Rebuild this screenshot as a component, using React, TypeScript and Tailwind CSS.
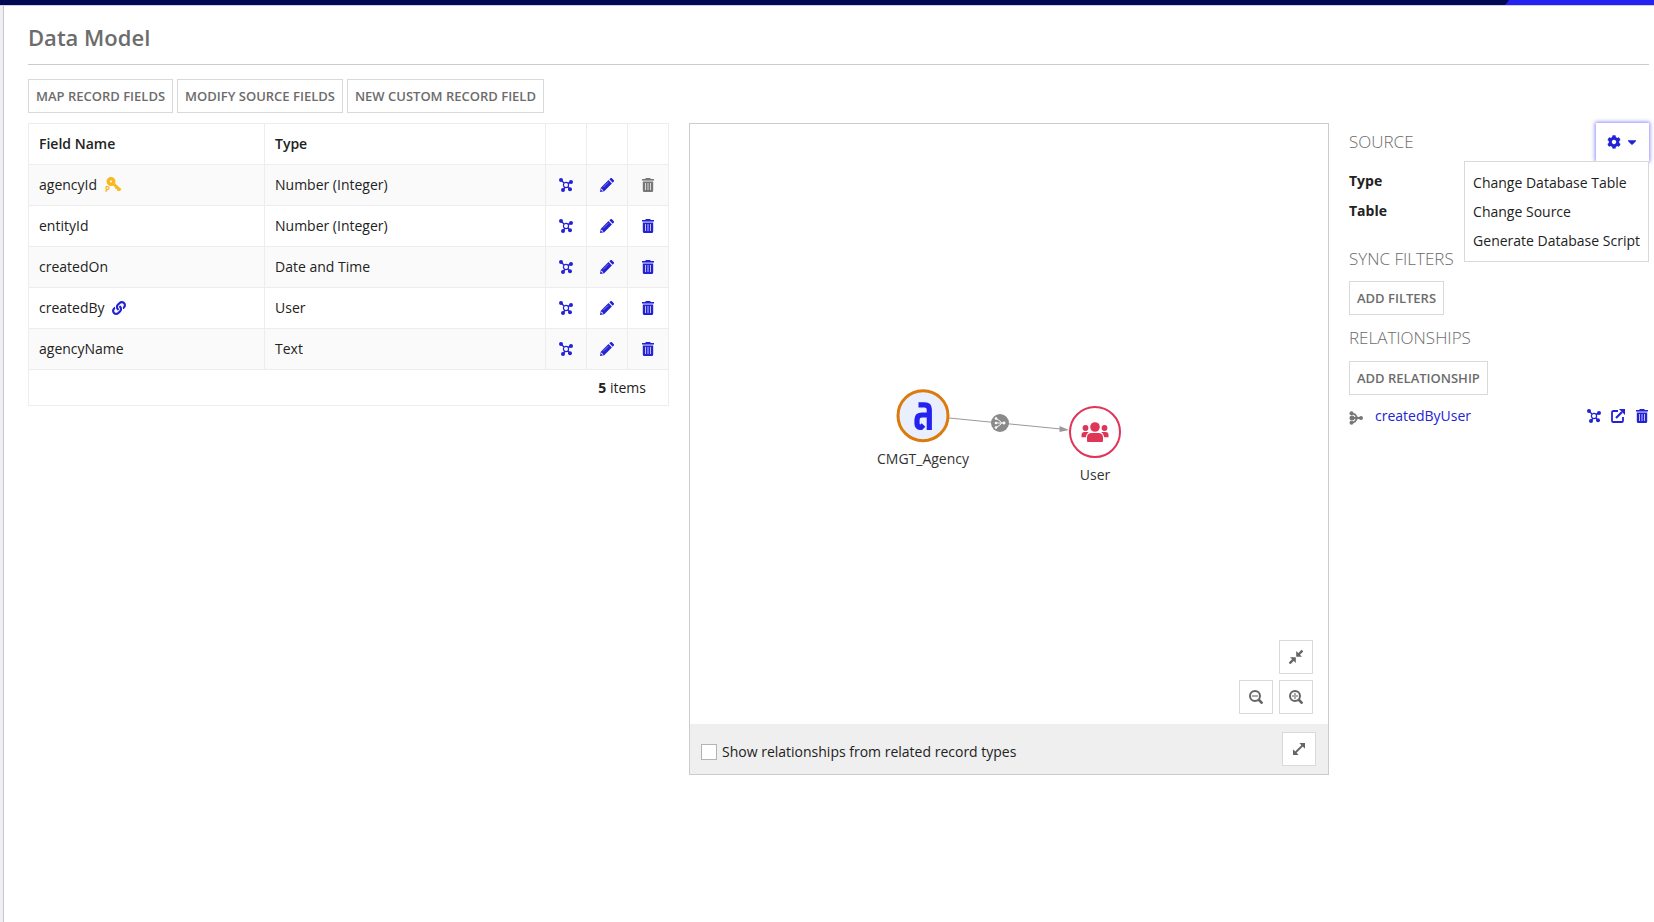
import type { ReactNode } from 'react';
import { FaCaretDown, FaCog, FaLink } from 'react-icons/fa';

const FIELDS = [
  { name: 'agencyId', type: 'Number (Integer)', isKey: true },
  { name: 'entityId', type: 'Number (Integer)' },
  { name: 'createdOn', type: 'Date and Time' },
  { name: 'createdBy', type: 'User', isLinked: true },
  { name: 'agencyName', type: 'Text' },
];

const SOURCE_ACTIONS = ['Change Database Table', 'Change Source', 'Generate Database Script'];

function RelationIcon() {
  return (
    <svg width="14" height="14" viewBox="0 0 14 14" fill="currentColor" stroke="currentColor">
      <path d="M2 2 5 5M12 4 9 5.500M4 12 6 9M11 11.500 9 9" strokeWidth="1.400" />
      <circle cx="7" cy="7" r="2.600" fill="none" strokeWidth="1.200" />
      <g stroke="none">
        <circle cx="2" cy="2" r="2" />
        <circle cx="12" cy="4" r="2" />
        <circle cx="4" cy="12" r="2" />
        <circle cx="11" cy="11.200" r="2" />
      </g>
    </svg>
  );
}

function PencilIcon() {
  return (
    <svg width="14" height="14" viewBox="0 0 14 14">
      <path
        fill="currentColor"
        d="M0 14 .8 9.800 8.500 2.100l3.400 3.400-7.700 7.700zM9.300 1.300 10.200.4a1.300 1.300 0 0 1 1.900 0l1.500 1.500a1.300 1.300 0 0 1 0 1.900l-.9.900z"
      />
      <path d="M3.200 9.300 8.300 4.200" stroke="#fff" strokeWidth=".8" opacity=".5" />
      <path d="M1 11.600 1.400 10.400 3.400 12.400l-1.200.4z" fill="#fff" />
    </svg>
  );
}

function TrashIcon() {
  return (
    <svg width="14" height="14" viewBox="0 0 14 14">
      <path fill="currentColor" d="M1 1h3.500V0h5v1H13v1.600H1zM1.800 4h10.400v8.500A1.500 1.500 0 0 1 10.700 14H3.300a1.500 1.500 0 0 1-1.500-1.500z" />
      <path d="M1.800 3.300h10.400" stroke="currentColor" strokeWidth="1.400" opacity=".5" />
      <path d="M4.500 5v7M7 5v7M9.500 5v7" stroke="#fff" strokeWidth="1" opacity=".7" />
    </svg>
  );
}

function KeyIcon() {
  return (
    <svg width="18" height="20" viewBox="0 -2 18 20">
      <g fill="none" stroke="#f9b81c">
        <circle cx="7" cy="4.500" r="2.800" strokeWidth="3.400" />
        <path d="m9.500 7 7 6.300" strokeWidth="2.800" />
        <path d="m11.500 10 .8 2M14 12v2" strokeWidth="1.600" />
      </g>
      <text x="1" y="15" fill="#f9b81c" className="text-[8px] font-bold">P</text>
    </svg>
  );
}

function BranchIcon() {
  return (
    <svg width="14" height="14" viewBox="0 0 14 14" fill="currentColor" stroke="currentColor">
      <path d="M2.500 2 6 3.500 8 6.500M2.500 12 6 10.500 8 7.500M2 7h10" fill="none" strokeWidth="1.800" />
      <g stroke="none">
        <circle cx="2.500" cy="2.200" r="2" />
        <circle cx="3" cy="7" r="2.500" />
        <circle cx="2.500" cy="11.800" r="2" />
        <circle cx="12" cy="7" r="2" />
      </g>
    </svg>
  );
}

function ExternalIcon() {
  return (
    <svg width="14" height="14" viewBox="0 0 14 14">
      <path d="M7 2H2.300A1.300 1.300 0 0 0 1 3.300v8.400A1.300 1.300 0 0 0 2.300 13h8.400a1.300 1.300 0 0 0 1.300-1.300V8" fill="none" stroke="currentColor" strokeWidth="1.800" />
      <path d="m5 9 6-6" stroke="currentColor" strokeWidth="2.200" />
      <path d="M8 0h6v6z" fill="currentColor" />
    </svg>
  );
}

function ZoomIcon({ plus = false }: { plus?: boolean }) {
  return (
    <svg width="14" height="14" viewBox="0 0 14 14" fill="none" stroke="currentColor">
      <circle cx="6" cy="6" r="5" strokeWidth="2" />
      <path d="m9.500 9.500 4 4" strokeWidth="2.600" />
      <path d={plus ? 'M3 6h6M6 3v6' : 'M3 6h6'} strokeWidth="2" opacity=".55" />
    </svg>
  );
}

function CollapseIcon() {
  return (
    <svg width="14" height="14" viewBox="0 0 14 14" fill="currentColor">
      <path d="M7.200 1v5.800H13zM1 7.200H6.800v5.800z" />
      <path d="m9 5 4.500-4.500M.5 13.500 5 9" stroke="currentColor" strokeWidth="2.400" />
    </svg>
  );
}

function ExpandIcon() {
  return (
    <svg width="12" height="12" viewBox="0 0 12 12" fill="currentColor">
      <path d="M6.300 0H12v5.700zM0 6.300V12h5.700z" />
      <path d="M10 2 2 10" stroke="currentColor" strokeWidth="1.800" />
    </svg>
  );
}

function OutlineButton({ children }: { children: ReactNode }) {
  return (
    <button type="button" className="h-[34px] border border-[#d9d9d9] bg-white px-[7px] text-[13px] font-semibold whitespace-nowrap text-[#6c6c6c] uppercase">
      {children}
    </button>
  );
}

function SquareButton({ label, children }: { label: string; children: ReactNode }) {
  return (
    <button type="button" aria-label={label} className="flex size-[34px] items-center justify-center border border-[#d9d9d9] bg-white text-[#666]">
      {children}
    </button>
  );
}

function IconButton({ label, disabled, children }: { label: string; disabled?: boolean; children: ReactNode }) {
  return (
    <button type="button" aria-label={label} disabled={disabled} className="block text-[#2322d4] disabled:text-[#777]">
      {children}
    </button>
  );
}

function FieldTable() {
  return (
    <table className="w-full table-fixed border-collapse border border-[#ededed] text-left">
      <colgroup>
        <col />
        <col className="w-[281px]" />
        <col className="w-[41px]" />
        <col className="w-[41px]" />
        <col className="w-[41px]" />
      </colgroup>
      <thead>
        <tr className="h-[41px]">
          <th className="border border-[#ededed] px-[10px] font-semibold">Field Name</th>
          <th className="border border-[#ededed] px-[10px] font-semibold">Type</th>
          <th className="border border-[#ededed]" />
          <th className="border border-[#ededed]" />
          <th className="border border-[#ededed]" />
        </tr>
      </thead>
      <tbody>
        {FIELDS.map((field) => (
          <tr key={field.name} className="h-[41px] odd:bg-[#fafafa]">
            <td className="border border-[#ededed] px-[10px]">
              <div className="flex items-center gap-[7px]">
                {field.name}
                {field.isKey && <KeyIcon />}
                {field.isLinked && <FaLink size={14} className="text-[#2322d4]" />}
              </div>
            </td>
            <td className="border border-[#ededed] px-[10px]">{field.type}</td>
            <td className="border border-[#ededed] px-[13px]">
              <IconButton label={`Add relationship for ${field.name}`}><RelationIcon /></IconButton>
            </td>
            <td className="border border-[#ededed] px-[13px]">
              <IconButton label={`Edit ${field.name}`}><PencilIcon /></IconButton>
            </td>
            <td className="border border-[#ededed] px-[13px]">
              <IconButton label={`Delete ${field.name}`} disabled={field.isKey}><TrashIcon /></IconButton>
            </td>
          </tr>
        ))}
      </tbody>
      <tfoot>
        <tr className="h-9">
          <td colSpan={5} className="pr-[22px] text-right">
            <span className="font-bold">5</span> items
          </td>
        </tr>
      </tfoot>
    </table>
  );
}

function RelationshipGraph() {
  return (
    <svg width="280" height="130" viewBox="-10 0 280 130">
      {/* Edge */}
      <path d="M70 59 182 70" stroke="#999" strokeWidth="1" />
      <path d="M190 71 180.500 67v6z" fill="#999" />
      <circle cx="121" cy="64" r="9" fill="#8a8a8a" />
      <g fill="#fff" stroke="#fff">
        <path d="M117 59.500 121 62 122.500 64 121 66 117 68.500M116 64h9" fill="none" strokeWidth=".9" />
        <circle cx="117" cy="59.500" r=".9" />
        <circle cx="117" cy="64" r=".9" />
        <circle cx="117" cy="68.500" r=".9" />
        <circle cx="125" cy="64" r="1.100" />
      </g>

      {/* Record type */}
      <circle cx="44" cy="56.700" r="25" fill="#e9effd" stroke="#dd7a0c" strokeWidth="3" />
      <path
        d="M39.500 45.800H45.500Q50.300 45.800 50.300 50.500V71M50.500 56H43Q38 56 38 60.500V64.500Q38 68.500 42 68.500L44.500 66"
        fill="none"
        stroke="#2322f0"
        strokeWidth="5.200"
      />
      <text x="44" y="105" textAnchor="middle" fill="#333" className="text-sm">CMGT_Agency</text>

      {/* Related user record */}
      <circle cx="216" cy="73" r="25" fill="#fff" stroke="#de3558" strokeWidth="2" />
      <g fill="#de3558">
        <circle cx="216" cy="68" r="4.800" />
        <circle cx="206.500" cy="69" r="2.900" />
        <circle cx="225.500" cy="69" r="2.900" />
        <path d="M208 82v-3.500a4.500 4.500 0 0 1 4.500-4.500h7a4.500 4.500 0 0 1 4.500 4.500V82a1 1 0 0 1-1 1h-14a1 1 0 0 1-1-1z" />
        <path d="M202.500 78v-2a3 3 0 0 1 3-3h4.300a7 7 0 0 0-3.100 5.300h-3.900zM229.500 78v-2a3 3 0 0 0-3-3h-4.300a7 7 0 0 1 3.100 5.300h3.900z" />
      </g>
      <text x="216" y="121" textAnchor="middle" fill="#333" className="text-sm">User</text>
    </svg>
  );
}

function DiagramPanel() {
  return (
    <section className="border border-[#ccc]">
      <div className="relative flex h-[600px] items-center justify-center">
        <RelationshipGraph />
        <div className="absolute right-[15px] bottom-[10px] flex flex-col items-end gap-[6px]">
          <SquareButton label="Fit to view"><CollapseIcon /></SquareButton>
          <div className="flex gap-[6px]">
            <SquareButton label="Zoom out"><ZoomIcon /></SquareButton>
            <SquareButton label="Zoom in"><ZoomIcon plus /></SquareButton>
          </div>
        </div>
      </div>
      <div className="flex h-[50px] items-center justify-between bg-[#efefef] pr-3 pl-[11px]">
        <label className="flex items-center gap-[5px] pt-[6px]">
          <input type="checkbox" className="size-4 appearance-none border border-[#b3b3b3] bg-white checked:bg-[#2322f0]" />
          Show relationships from related record types
        </label>
        <SquareButton label="Expand diagram"><ExpandIcon /></SquareButton>
      </div>
    </section>
  );
}

function SourceMenu() {
  return (
    <div className="relative">
      <button type="button" aria-label="Source options" className="flex h-[38px] w-[53px] items-center justify-end gap-1 bg-white pr-[10px] text-[#2322d4] shadow-[0_0_4px_1px_#8f8ef2]">
        <FaCog size={14} />
        <FaCaretDown size={14} />
      </button>
      <ul className="absolute top-full right-0 z-10 border border-[#d9d9d9] bg-white py-[6px]">
        {SOURCE_ACTIONS.map((action) => (
          <li key={action}>
            <button type="button" className="block w-full px-2 text-left leading-[29px] whitespace-nowrap">{action}</button>
          </li>
        ))}
      </ul>
    </div>
  );
}

function SidePanel() {
  return (
    <aside>
      <div className="flex h-[38px] items-center justify-between">
        <h2 className="text-[17px] font-light text-[#6c6c6c]">SOURCE</h2>
        <SourceMenu />
      </div>
      <dl className="mt-[5px] leading-[30px] font-bold">
        <dt>Type</dt>
        <dt>Table</dt>
      </dl>
      <h2 className="mt-[21px] text-[17px] leading-6 font-light text-[#6c6c6c]">SYNC FILTERS</h2>
      <div className="mt-[10px]">
        <OutlineButton>Add filters</OutlineButton>
      </div>
      <h2 className="mt-[11px] text-[17px] leading-6 font-light text-[#6c6c6c]">RELATIONSHIPS</h2>
      <div className="mt-[11px]">
        <OutlineButton>Add relationship</OutlineButton>
      </div>
      <div className="mt-[11px] flex items-center">
        <span className="pt-1 text-[#777]"><BranchIcon /></span>
        <a href="#createdByUser" className="ml-3 text-[#2322d4]">createdByUser</a>
        <div className="ml-auto flex gap-[10px]">
          <IconButton label="Show relationship"><RelationIcon /></IconButton>
          <IconButton label="Open related record"><ExternalIcon /></IconButton>
          <IconButton label="Delete relationship"><TrashIcon /></IconButton>
        </div>
      </div>
    </aside>
  );
}

export default function App() {
  return (
    <div className="flex min-h-screen flex-col bg-white font-['Open_Sans',sans-serif] text-sm text-[#222]">
      <div className="flex h-[5px] justify-end bg-[#020a51]">
        <div className="w-[9%] bg-[#2322f0] [clip-path:polygon(4px_0,100%_0,100%_100%,0_100%)]" />
      </div>
      <div className="flex flex-1 border-t border-[#cfcff0] bg-[#f0f0f2] pl-[3px]">
        <main className="flex-1 border-l border-[#c5c5d2] bg-white pr-[5px] pl-6">
          <h1 className="border-b border-[#ccc] pt-[15px] pb-[11px] text-[22px] leading-8 font-semibold text-[#6c6c6c]">Data Model</h1>
          <div className="mt-[14px] flex gap-1">
            <OutlineButton>Map record fields</OutlineButton>
            <OutlineButton>Modify source fields</OutlineButton>
            <OutlineButton>New custom record field</OutlineButton>
          </div>
          <div className="mt-[10px] grid grid-cols-[641fr_640fr_300fr] items-start gap-5">
            <FieldTable />
            <DiagramPanel />
            <SidePanel />
          </div>
        </main>
      </div>
    </div>
  );
}
